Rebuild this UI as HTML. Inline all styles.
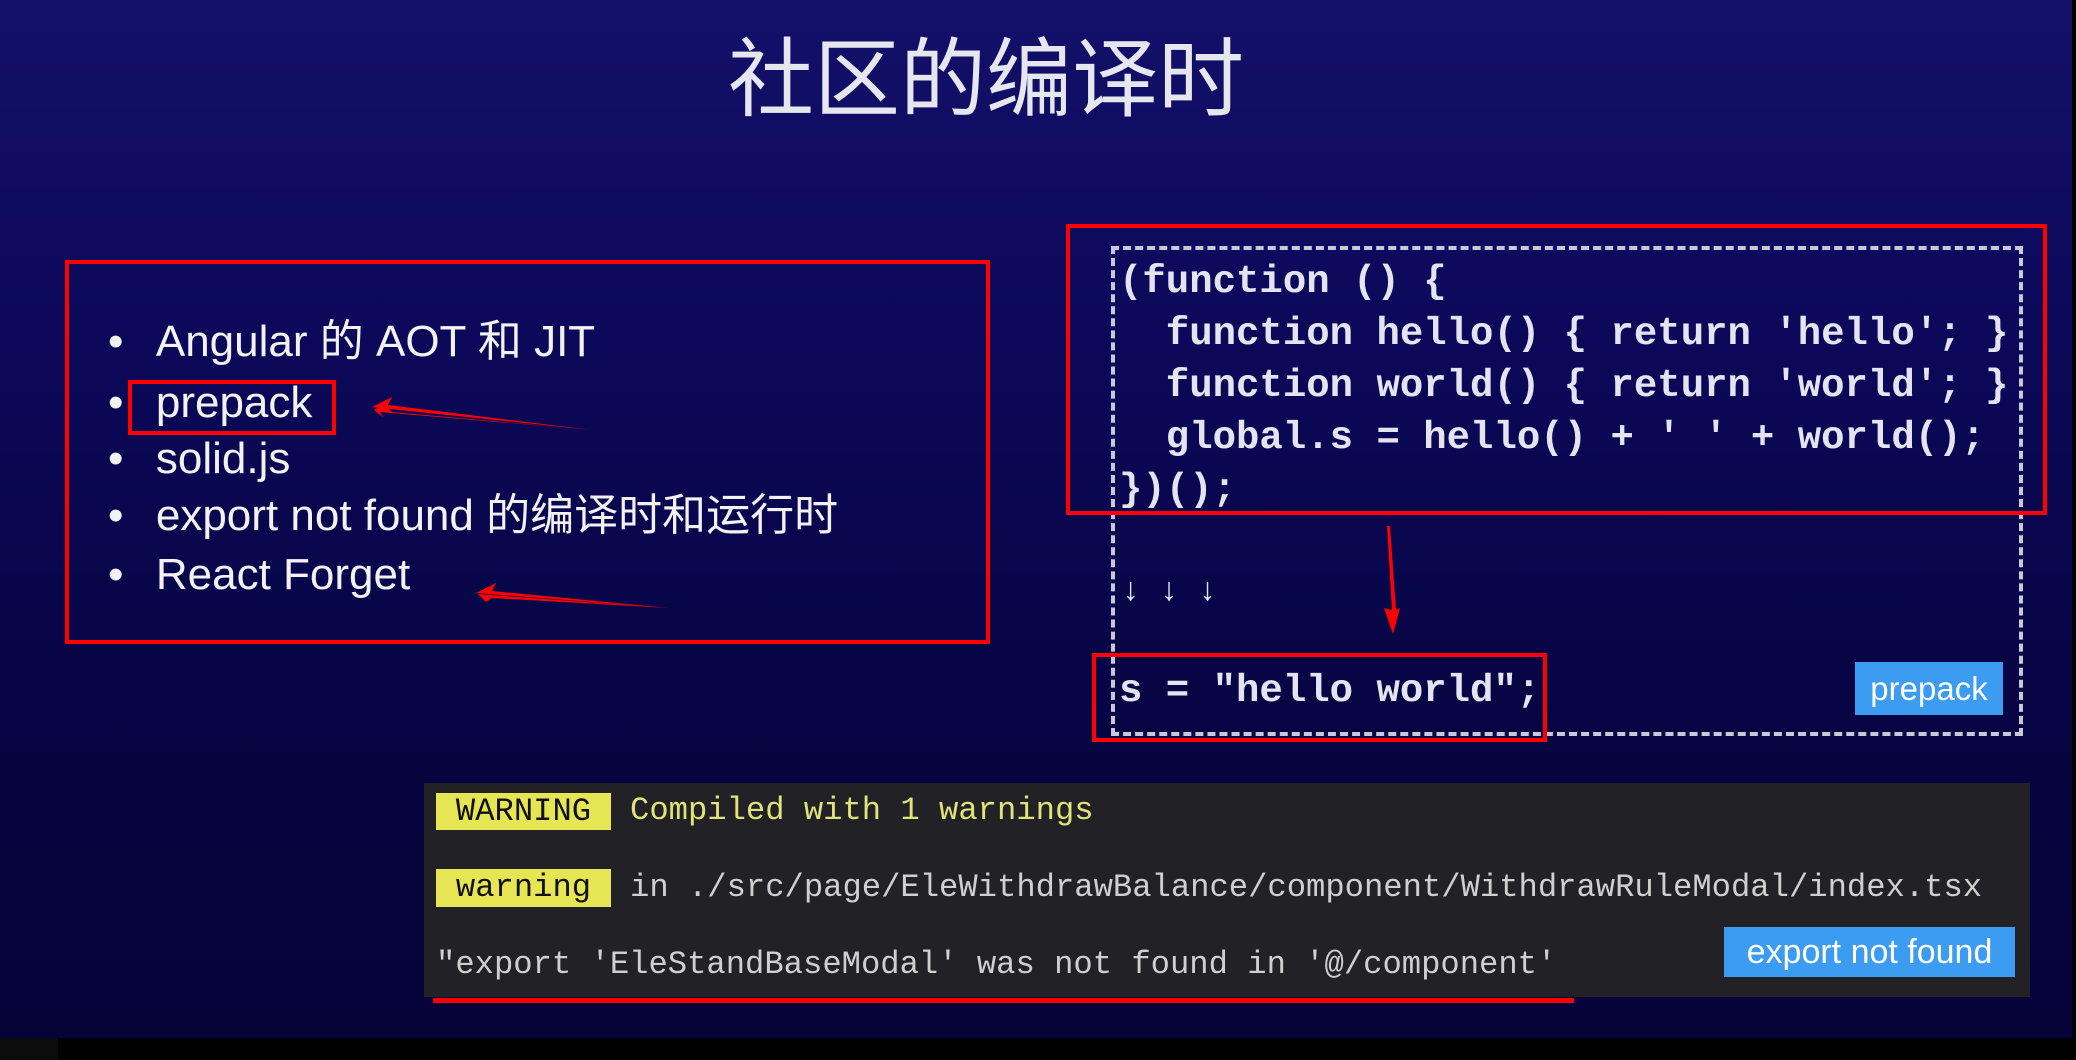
<!DOCTYPE html>
<html><head><meta charset="utf-8"><style>
*{margin:0;padding:0;box-sizing:border-box}
html,body{width:2076px;height:1060px;overflow:hidden;background:#000}
#s{position:absolute;left:0;top:0;width:2072px;height:1038px;background:linear-gradient(180deg,#13106a 0%,#0b0858 35%,#06043f 75%,#050338 100%);overflow:hidden}
.a{position:absolute}
.t{font-family:"Liberation Sans","Noto Sans CJK SC",sans-serif;color:#f2f2f2}
.m{font-family:"Liberation Mono","DejaVu Sans Mono",monospace;white-space:pre}
.rb{position:absolute;border:4px solid #f00}
.code{font-size:39px;font-weight:bold;color:#e4e4f0;line-height:52px}
.term{font-size:32.2px;line-height:38px}
</style></head><body>
<div id="s">
<div class="a t" style="left:728px;top:30px;font-size:86px;line-height:100px;color:#e6e6ee">社区的编译时</div>

<div class="rb" style="left:65px;top:260px;width:925px;height:384px"></div>
<div class="a t" style="left:108px;top:314px;font-size:44px;line-height:56px">
<div style="height:61px">•&nbsp;&nbsp;<span style="position:relative;left:8px">Angular 的 AOT 和 JIT</span></div>
<div style="height:56px">•&nbsp;&nbsp;<span style="position:relative;left:8px">prepack</span></div>
<div style="height:57px">•&nbsp;&nbsp;<span style="position:relative;left:8px">solid.js</span></div>
<div style="height:59px">•&nbsp;&nbsp;<span style="position:relative;left:8px">export not found 的编译时和运行时</span></div>
<div>•&nbsp;&nbsp;<span style="position:relative;left:8px">React Forget</span></div>
</div>
<div class="rb" style="left:128px;top:380px;width:208px;height:55px"></div>
<svg class="a" style="left:0;top:0" width="2072" height="1038">
<polygon points="592,430 392,412 384,404 374,410 384,418 380,412" fill="#f00"/>
<polygon points="592,430 380,408 372,407 392,397 388,405" fill="#f00"/>
<polygon points="669,608 488,594 476,593 496,583 492,591" fill="#f00"/>
<polygon points="669,608 478,594 486,602 492,598" fill="#f00"/>
<polygon points="1387,526 1392,610 1384,608 1393,634 1400,608 1396,610 1390,526" fill="#f00"/>
</svg>

<div class="a" style="left:1111px;top:246px;width:912px;height:490px;border:4px dashed #c8c8d8"></div>
<div class="rb" style="left:1066px;top:224px;width:981px;height:291px"></div>
<div class="a m code" style="left:1119px;top:256px">(function () {
  function hello() { return 'hello'; }
  function world() { return 'world'; }
  global.s = hello() + ' ' + world();
})();</div>
<div class="a m code" style="left:1121px;top:566px;font-size:32px">↓ ↓ ↓</div>
<div class="a m code" style="left:1119px;top:665px">s = "hello world";</div>
<div class="rb" style="left:1092px;top:653px;width:455px;height:89px"></div>
<div class="a t" style="left:1855px;top:662px;width:148px;height:53px;background:#3b9cf2;color:#fff;font-size:33px;line-height:53px;text-align:center">prepack</div>

<div class="a" style="left:424px;top:783px;width:1606px;height:214px;background:#222226"></div>
<div class="a m term" style="left:436px;top:793px;width:175px;height:37px;background:#e6e655;color:#111;text-align:center;line-height:37px">WARNING</div>
<div class="a m term" style="left:630px;top:792px;color:#e2e27a">Compiled with 1 warnings</div>
<div class="a m term" style="left:436px;top:869px;width:175px;height:38px;background:#e6e655;color:#111;text-align:center;line-height:38px">warning</div>
<div class="a m term" style="left:630px;top:869px;color:#cfcfcf">in ./src/page/EleWithdrawBalance/component/WithdrawRuleModal/index.tsx</div>
<div class="a m term" style="left:436px;top:946px;color:#cfcfcf">"export 'EleStandBaseModal' was not found in '@/component'</div>
<div class="a t" style="left:1724px;top:927px;width:291px;height:50px;background:#3b9cf2;color:#fff;font-size:34px;line-height:50px;text-align:center">export not found</div>
<div class="a" style="left:433px;top:998px;width:1141px;height:5px;background:#f00"></div>
</div>
<div class="a" style="left:0;top:1038px;width:58px;height:22px;background:#0c0c0c"></div>
</body></html>
